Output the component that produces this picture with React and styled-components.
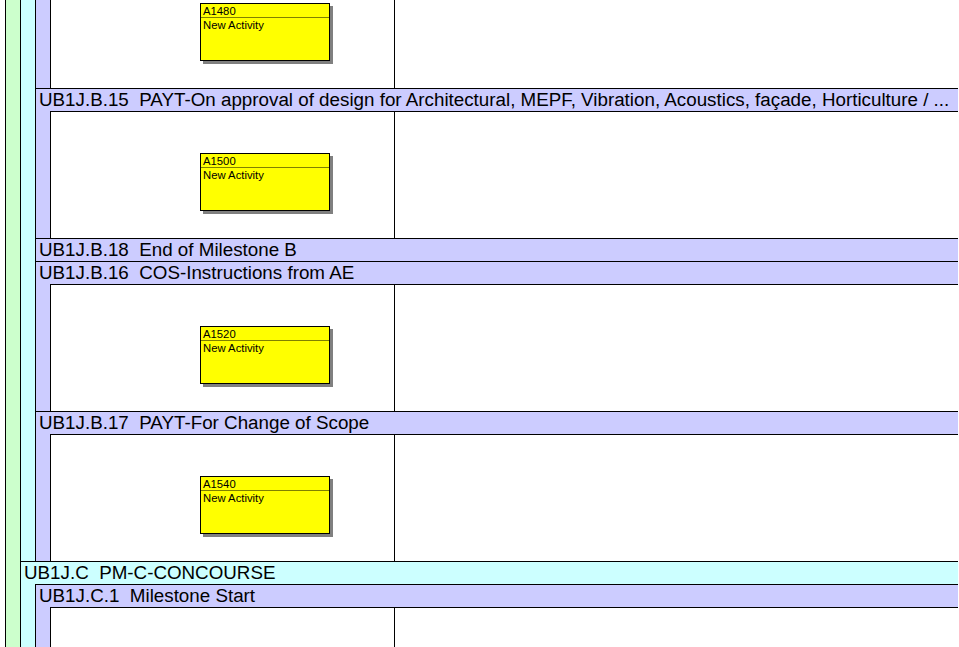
import React, { useEffect, useRef } from 'react';
import styled, { createGlobalStyle } from 'styled-components';

const GREEN = '#ccffcc';
const CYAN = '#ccffff';
const LAVENDER = '#ccccff';

const GlobalStyle = createGlobalStyle`
  html, body {
    margin: 0;
    padding: 0;
    background: #fff;
    overflow: hidden;
  }
  body {
    font-family: "Liberation Sans", Arial, sans-serif;
    color: #000;
  }
`;

const Viewport = styled.div`
  width: 959px;
  height: 647px;
  overflow: hidden;
  background: #fff;
`;

const Tree = styled.div`
  width: 953px;
  padding-left: 5px;
`;

const Group = styled.div`
  border-left: 1px solid #000;
  background: ${p => p.$color};
`;

const Header = styled.div`
  height: 22px;
  line-height: 22px;
  border-top: 1px solid #000;
  background: ${p => p.$color};
  padding-left: 3px;
  font-size: 18.8px;
  white-space: pre;
`;

const Body = styled.div`
  padding-left: 14px;
  background: ${p => p.$color};
`;

const Content = styled.div`
  display: flex;
  height: 126px;
  border-top: ${p => (p.$cut ? 'none' : '1px solid #000')};
  border-left: 1px solid #000;
  background: #fff;
`;

const Cell = styled.div`
  width: 344px;
  border-right: 1px solid #000;
  padding: 41px 0 0 149px;
  box-sizing: border-box;
`;

const Timeline = styled.div`
  flex: 1;
`;

const Activity = styled.div`
  width: 128px;
  height: 56px;
  border: 1px solid #000;
  background: #ffff00;
  box-shadow: 3px 3px 0 #808080;
  font-size: 11.3px;
`;

const ActivityId = styled.div`
  height: 13px;
  line-height: 14px;
  padding-left: 2px;
  border-bottom: 1px solid #808000;
`;

const ActivityName = styled.div`
  line-height: 14px;
  padding-left: 2px;
`;

const ActivityRow = ({ code, name, activity }) => (
  <Group $color={LAVENDER}>
    {name && <Header $color={LAVENDER}>{code}  {name}</Header>}
    <Body $color={LAVENDER}>
      {activity !== undefined && (
        <Content $cut={!name}>
          <Cell>
            {activity && (
              <Activity>
                <ActivityId>{activity}</ActivityId>
                <ActivityName>New Activity</ActivityName>
              </Activity>
            )}
          </Cell>
          <Timeline />
        </Content>
      )}
    </Body>
  </Group>
);

// first row continues from above the visible area, so it has no header here
const rowsB = [
  { code: 'UB1J.B.14', activity: 'A1480' },
  {
    code: 'UB1J.B.15',
    name: 'PAYT-On approval of design for Architectural, MEPF, Vibration, Acoustics, façade, Horticulture / ...',
    activity: 'A1500',
  },
  { code: 'UB1J.B.18', name: 'End of Milestone B' },
  { code: 'UB1J.B.16', name: 'COS-Instructions from AE', activity: 'A1520' },
  { code: 'UB1J.B.17', name: 'PAYT-For Change of Scope', activity: 'A1540' },
];

const rowsC = [
  { code: 'UB1J.C.1', name: 'Milestone Start', activity: null },
];

export default function App() {
  const ref = useRef(null);

  useEffect(() => {
    if (ref.current) ref.current.scrollTop = 38;
  }, []);

  return (
    <>
      <GlobalStyle />
      <Viewport ref={ref}>
        <Tree>
          <Group $color={GREEN}>
            <Body $color={GREEN}>
              <Group $color={CYAN}>
                <Body $color={CYAN}>
                  {rowsB.map(r => (
                    <ActivityRow key={r.code} {...r} />
                  ))}
                </Body>
              </Group>
              <Group $color={CYAN}>
                <Header $color={CYAN}>UB1J.C  PM-C-CONCOURSE</Header>
                <Body $color={CYAN}>
                  {rowsC.map(r => (
                    <ActivityRow key={r.code} {...r} />
                  ))}
                </Body>
              </Group>
            </Body>
          </Group>
        </Tree>
      </Viewport>
    </>
  );
}
